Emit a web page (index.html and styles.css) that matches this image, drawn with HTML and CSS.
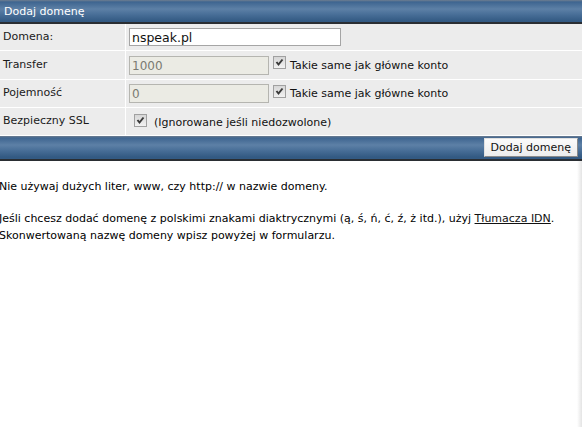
FILE: index.html
```html
<!DOCTYPE html>
<html lang="pl">
<head>
<meta charset="utf-8">
<title>Dodaj domenę</title>
<link rel="stylesheet" href="styles.css">
</head>
<body>
<div class="page">
  <div class="bar bar-top">Dodaj domenę</div>
  <div class="form">
    <div class="row row-1">
      <div class="label">Domena:</div>
      <div class="field"><span class="input input-main">nspeak.pl</span></div>
    </div>
    <div class="row row-2">
      <div class="label">Transfer</div>
      <div class="field"><span class="input input-dis">1000</span><span class="cb"><svg width="11" height="11" viewBox="0 0 11 11"><polyline points="2.5,5 4.5,7.5 8.5,2.5" fill="none" stroke="#3a3a3a" stroke-width="2"/></svg></span><span class="cb-text">Takie same jak główne konto</span></div>
    </div>
    <div class="row row-3">
      <div class="label">Pojemność</div>
      <div class="field"><span class="input input-dis">0</span><span class="cb"><svg width="11" height="11" viewBox="0 0 11 11"><polyline points="2.5,5 4.5,7.5 8.5,2.5" fill="none" stroke="#3a3a3a" stroke-width="2"/></svg></span><span class="cb-text">Takie same jak główne konto</span></div>
    </div>
    <div class="row row-4">
      <div class="label">Bezpieczny SSL</div>
      <div class="field field-ssl"><span class="cb cb-ssl"><svg width="11" height="11" viewBox="0 0 11 11"><polyline points="2.5,5 4.5,7.5 8.5,2.5" fill="none" stroke="#3a3a3a" stroke-width="2"/></svg></span><span class="cb-text ssl-text">(Ignorowane jeśli niedozwolone)</span></div>
    </div>
  </div>
  <div class="bar bar-bottom"><span class="button">Dodaj domenę</span></div>
  <div class="info">
    <p>Nie używaj dużych liter, www, czy http:// w nazwie domeny.</p>
    <p>Jeśli chcesz dodać domenę z polskimi znakami diaktrycznymi (ą, ś, ń, ć, ź, ż itd.), użyj <a class="link" href="#">Tłumacza IDN</a>.<br>Skonwertowaną nazwę domeny wpisz powyżej w formularzu.</p>
  </div>
</div>
</body>
</html>
```

FILE: styles.css
```css
html, body {
  margin: 0;
  padding: 0;
  background: #ffffff;
}
body {
  font-family: "DejaVu Sans", Verdana, sans-serif;
  font-size: 11px;
  color: #000;
  width: 582px;
  height: 427px;
  overflow: hidden;
  position: relative;
}
body::after {
  content: "";
  position: absolute;
  right: 0;
  top: 161px;
  bottom: 0;
  width: 5px;
  background: linear-gradient(to right, #ffffff, #e4e4e4);
}
.page {
  display: flex;
  flex-direction: column;
}
.bar {
  background: linear-gradient(to bottom, #6f7e90 0px, #3e6590 2px, #5d80a6 9px, #4a7099 14px, #335a83 21px);
  border-bottom: 2px solid #2a2e33;
  color: #fff;
  box-sizing: border-box;
}
.bar-top {
  height: 24px;
  padding: 5px 0 0 4px;
  font-size: 11px;
}
.bar-bottom {
  height: 25px;
  display: flex;
  justify-content: flex-end;
  align-items: flex-start;
  padding: 2px 4px 0 0;
  margin-top: 1px;
}
.button {
  display: block;
  height: 19px;
  box-sizing: border-box;
  padding: 2px 6px 0 6px;
  background: linear-gradient(#fbfbfb, #ececec);
  border: 1px solid #8a8a8a;
  border-top-color: #e0e0e0;
  border-left-color: #e0e0e0;
  color: #111;
  font-size: 11px;
}
.form {
  display: flex;
  flex-direction: column;
  background: #ffffff;
  gap: 1px;
}
.row {
  display: grid;
  grid-template-columns: 125px 1fr;
  column-gap: 1px;
}
.row-1 { height: 26px; }
.row-2 { height: 28px; }
.row-3 { height: 27px; }
.row-4 { height: 27px; }
.label, .field {
  background: #ececec;
  display: flex;
  align-items: center;
}
.label {
  padding-left: 3px;
  color: #1a1a1a;
  padding-bottom: 2px;
  box-sizing: border-box;
}
.field {
  padding-left: 3px;
}
.input {
  display: block;
  box-sizing: border-box;
  height: 19px;
  padding: 2px 0 0 2px;
  font-size: 12px;
}
.input-main {
  width: 212px;
  height: 18px;
  background: #fff;
  border: 1px solid #a5a5a5;
  color: #111;
  font-size: 12.5px;
  padding-top: 1px;
}
.input-dis {
  width: 140px;
  background: #ebebe4;
  border: 1px solid #b5b5b0;
  color: #7a7a72;
}
.cb {
  display: block;
  width: 13px;
  height: 13px;
  box-sizing: border-box;
  border: 1px solid #a0a0a0;
  background: linear-gradient(#d6d6d6, #f2f2f2);
  margin-left: 4px;
  margin-top: -5px;
}
.cb svg {
  display: block;
}
.cb-text {
  margin-left: 4px;
  color: #111;
}
.field-ssl {
  padding-left: 4px;
}
.cb-ssl {
  margin-top: -3px;
}
.ssl-text {
  margin-left: 7px;
  padding-top: 2px;
}
.info {
  padding: 17px 0 0 0;
  margin-left: -1px;
  line-height: 17px;
}
.info p {
  margin: 0 0 15px 0;
}
.link {
  color: #111;
  text-decoration: underline;
}
```
